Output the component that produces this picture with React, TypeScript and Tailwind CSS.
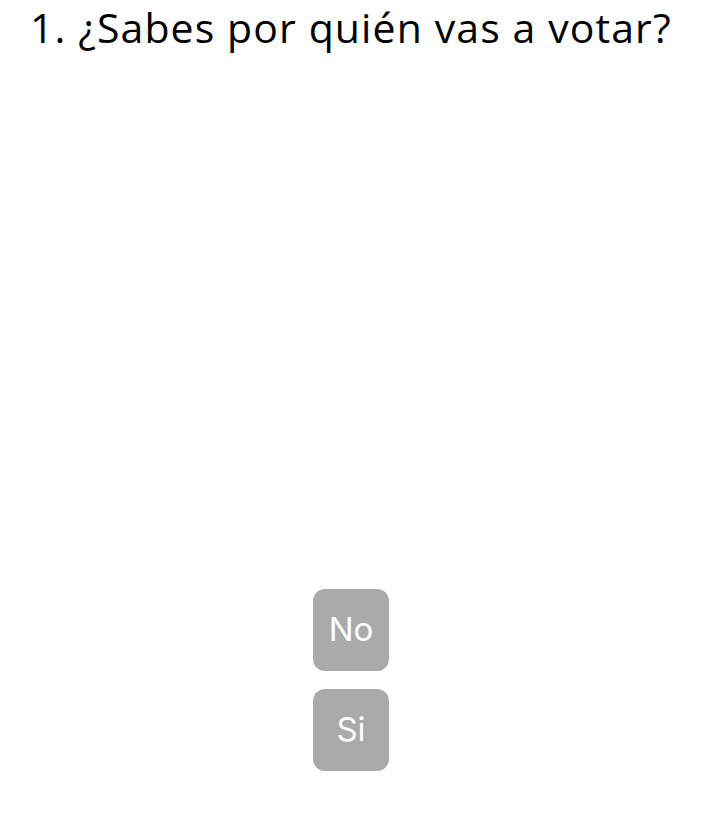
export default function App() {
  return (
    <main className="flex h-[814px] w-full flex-col bg-white">
      <h1
        className="whitespace-nowrap px-[30px] text-[41px] leading-[54px] tracking-[1.1px] text-black"
        style={{ fontFamily: '"Open Sans", "Noto Sans", sans-serif' }}
      >
        1. ¿Sabes por quién vas a votar?
      </h1>
      <div className="mt-auto mb-[43px] flex flex-col items-center gap-[18px] pr-[4px]">
        {["No", "Si"].map((label) => (
          <button
            key={label}
            className="flex h-[82px] w-[76px] items-center justify-center rounded-[12px] bg-[#aaaaaa] text-[33px] text-white"
            style={{ fontFamily: '"Inter", sans-serif' }}
          >
            {label}
          </button>
        ))}
      </div>
    </main>
  );
}
